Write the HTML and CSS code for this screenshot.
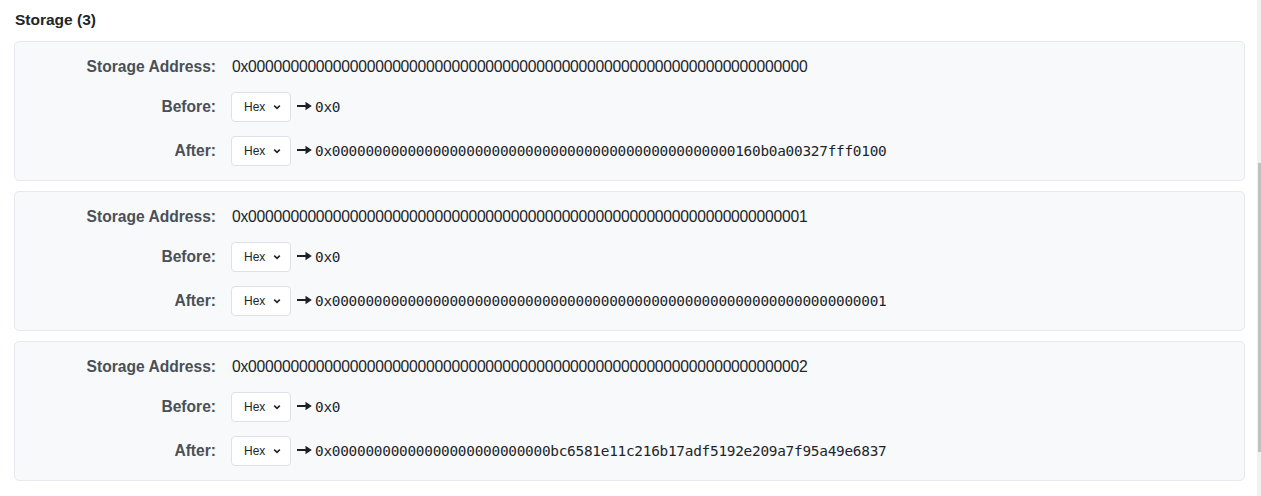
FILE: index.html
```html
<!DOCTYPE html>
<html lang="en">
<head>
<meta charset="utf-8">
<title>Storage</title>
<link rel="stylesheet" href="styles.css">
</head>
<body>
<div class="page">
  <h2 class="title">Storage (3)</h2>

  <div class="card">
    <div class="row addr-row"><div class="label">Storage Address:</div><div class="addr">0x000000000000000000000000000000000000000000000000000000000000000000</div></div>
    <div class="row"><div class="label">Before:</div><div class="val"><span class="select">Hex<svg class="chev" viewBox="0 0 10 6" width="8" height="6"><path d="M1.5 1.2 L5 4.6 L8.5 1.2" fill="none" stroke="#212529" stroke-width="2"/></svg></span><svg class="arrow" viewBox="0 0 15 10" width="15" height="10"><path d="M0 3.9 H9.5 V6.1 H0 Z M8.5 0.8 L14.8 5 L8.5 9.2 Z" fill="#1c1f23"/></svg><span class="mono">0x0</span></div></div>
    <div class="row"><div class="label">After:</div><div class="val"><span class="select">Hex<svg class="chev" viewBox="0 0 10 6" width="8" height="6"><path d="M1.5 1.2 L5 4.6 L8.5 1.2" fill="none" stroke="#212529" stroke-width="2"/></svg></span><svg class="arrow" viewBox="0 0 15 10" width="15" height="10"><path d="M0 3.9 H9.5 V6.1 H0 Z M8.5 0.8 L14.8 5 L8.5 9.2 Z" fill="#1c1f23"/></svg><span class="mono">0x000000000000000000000000000000000000000000000000160b0a00327fff0100</span></div></div>
  </div>

  <div class="card">
    <div class="row addr-row"><div class="label">Storage Address:</div><div class="addr">0x000000000000000000000000000000000000000000000000000000000000000001</div></div>
    <div class="row"><div class="label">Before:</div><div class="val"><span class="select">Hex<svg class="chev" viewBox="0 0 10 6" width="8" height="6"><path d="M1.5 1.2 L5 4.6 L8.5 1.2" fill="none" stroke="#212529" stroke-width="2"/></svg></span><svg class="arrow" viewBox="0 0 15 10" width="15" height="10"><path d="M0 3.9 H9.5 V6.1 H0 Z M8.5 0.8 L14.8 5 L8.5 9.2 Z" fill="#1c1f23"/></svg><span class="mono">0x0</span></div></div>
    <div class="row"><div class="label">After:</div><div class="val"><span class="select">Hex<svg class="chev" viewBox="0 0 10 6" width="8" height="6"><path d="M1.5 1.2 L5 4.6 L8.5 1.2" fill="none" stroke="#212529" stroke-width="2"/></svg></span><svg class="arrow" viewBox="0 0 15 10" width="15" height="10"><path d="M0 3.9 H9.5 V6.1 H0 Z M8.5 0.8 L14.8 5 L8.5 9.2 Z" fill="#1c1f23"/></svg><span class="mono">0x000000000000000000000000000000000000000000000000000000000000000001</span></div></div>
  </div>

  <div class="card">
    <div class="row addr-row"><div class="label">Storage Address:</div><div class="addr">0x000000000000000000000000000000000000000000000000000000000000000002</div></div>
    <div class="row"><div class="label">Before:</div><div class="val"><span class="select">Hex<svg class="chev" viewBox="0 0 10 6" width="8" height="6"><path d="M1.5 1.2 L5 4.6 L8.5 1.2" fill="none" stroke="#212529" stroke-width="2"/></svg></span><svg class="arrow" viewBox="0 0 15 10" width="15" height="10"><path d="M0 3.9 H9.5 V6.1 H0 Z M8.5 0.8 L14.8 5 L8.5 9.2 Z" fill="#1c1f23"/></svg><span class="mono">0x0</span></div></div>
    <div class="row"><div class="label">After:</div><div class="val"><span class="select">Hex<svg class="chev" viewBox="0 0 10 6" width="8" height="6"><path d="M1.5 1.2 L5 4.6 L8.5 1.2" fill="none" stroke="#212529" stroke-width="2"/></svg></span><svg class="arrow" viewBox="0 0 15 10" width="15" height="10"><path d="M0 3.9 H9.5 V6.1 H0 Z M8.5 0.8 L14.8 5 L8.5 9.2 Z" fill="#1c1f23"/></svg><span class="mono">0x00000000000000000000000000bc6581e11c216b17adf5192e209a7f95a49e6837</span></div></div>
  </div>
</div>
<div class="scrollbar"><div class="thumb"></div></div>
</body>
</html>
```

FILE: styles.css
```css
html, body {
  margin: 0;
  padding: 0;
  background: #ffffff;
}
body {
  font-family: "Liberation Sans", Arial, sans-serif;
  color: #212529;
  overflow: hidden;
}
.page {
  padding: 9px 16px 0 14px;
  display: flex;
  flex-direction: column;
  gap: 10px;
}
.title {
  margin: 0 0 0 1px;
  font-size: 15.5px;
  font-weight: bold;
  line-height: 22px;
  color: #212529;
}
.card {
  background: #f8f9fa;
  border: 1px solid #e6e9ee;
  border-radius: 5px;
  padding: 13px 0 14px 0;
  display: flex;
  flex-direction: column;
  gap: 14px;
}
.row {
  display: grid;
  grid-template-columns: 201px 1fr;
  column-gap: 16px;
  align-items: center;
}
.addr-row {
  margin-bottom: -1px;
}
.label {
  text-align: right;
  font-weight: bold;
  font-size: 15.6px;
  color: #495057;
  line-height: 24px;
}
.addr {
  font-size: 15.7px;
  letter-spacing: -0.25px;
  line-height: 24px;
  color: #212529;
}
.val {
  display: flex;
  align-items: center;
  margin-left: -1px;
}
.select {
  box-sizing: border-box;
  width: 60px;
  height: 30px;
  border: 1px solid #dee2e6;
  border-radius: 4px;
  background: #ffffff;
  font-size: 12px;
  color: #212529;
  display: flex;
  align-items: center;
  padding-left: 12px;
  gap: 8px;
}
.chev {
  display: block;
}
.arrow {
  display: block;
  margin-left: 6px;
  margin-right: 3px;
  position: relative;
  top: -1px;
}
.mono {
  font-family: "DejaVu Sans Mono", "Liberation Mono", monospace;
  font-size: 14.4px;
  letter-spacing: -0.26px;
  color: #212529;
}
.scrollbar {
  position: absolute;
  top: 0;
  right: 0;
  width: 4px;
  height: 496px;
  background: #f1f1f1;
}
.thumb {
  margin-top: 163px;
  margin-left: 1px;
  width: 3px;
  height: 289px;
  background: #c1c1c1;
}
```
